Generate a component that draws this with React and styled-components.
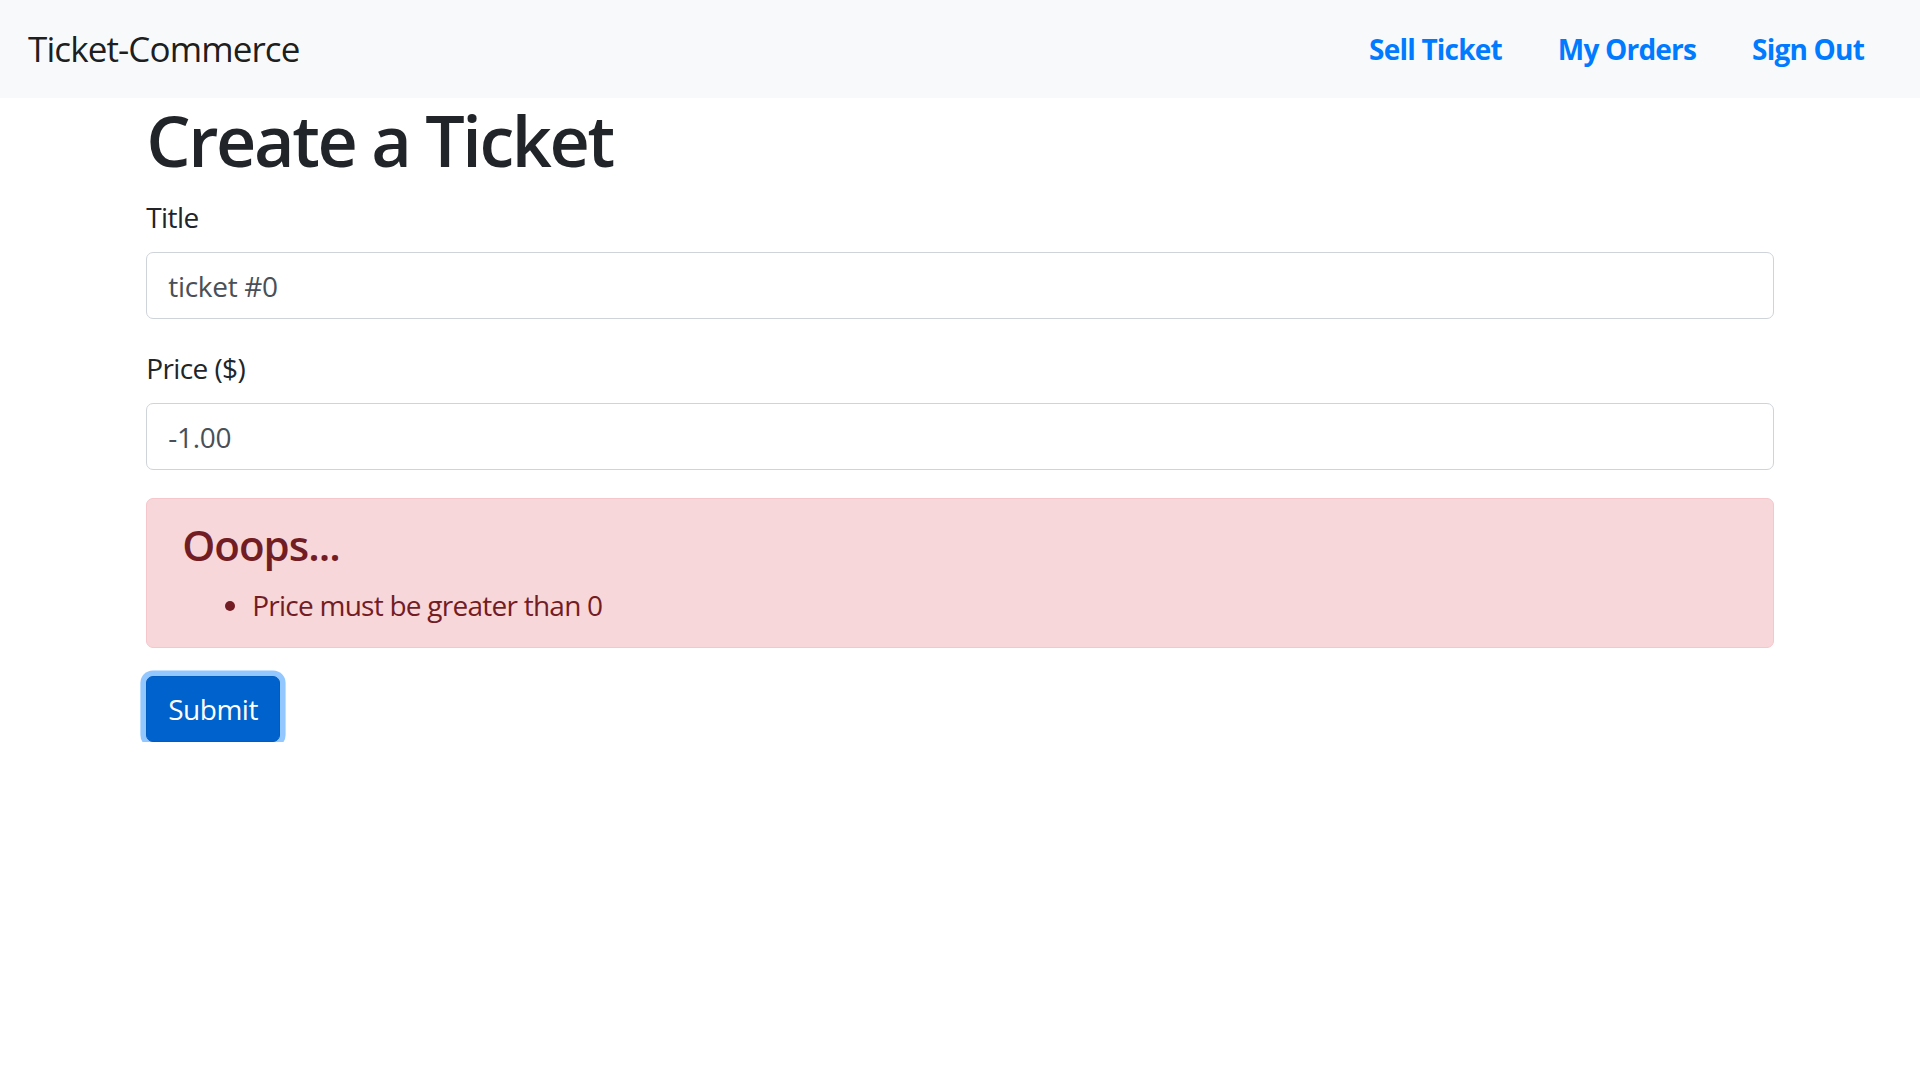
import React from "react";
import styled, { createGlobalStyle } from "styled-components";

const GlobalStyle = createGlobalStyle`
  *, *::before, *::after {
    box-sizing: border-box;
  }
  html, body {
    margin: 0;
    padding: 0;
    background: #fff;
  }
  body {
    font-family: "Segoe UI", "Open Sans", "Noto Sans", sans-serif;
    font-size: 28px;
    line-height: 1.5;
    color: #212529;
  }
`;

const Navbar = styled.nav`
  display: flex;
  align-items: center;
  justify-content: space-between;
  padding: 14px 28px;
  background: #f8f9fa;
`;

const Brand = styled.a`
  display: inline-block;
  padding: 8.75px 0;
  font-size: 35px;
  line-height: 1.5;
  letter-spacing: -0.9px;
  color: rgba(0, 0, 0, 0.9);
  text-decoration: none;
`;

const NavList = styled.ul`
  display: flex;
  margin: 0;
  padding: 0;
  list-style: none;
`;

const NavLink = styled.a`
  display: block;
  padding: 14px 28px;
  font-weight: 700;
  letter-spacing: -0.8px;
  color: #007bff;
  text-decoration: none;
`;

const Container = styled.div`
  width: 1680px;
  margin: 0 auto;
  padding: 0 26.25px;
`;

const Heading = styled.h1`
  margin: 0 0 14px;
  font-size: 70px;
  font-weight: 600;
  line-height: 1.2;
  letter-spacing: -2.4px;
`;

const FormGroup = styled.div`
  margin-bottom: 28px;
`;

const Label = styled.label`
  display: inline-block;
  margin-bottom: 14px;
  letter-spacing: -0.6px;
`;

const Input = styled.input`
  display: block;
  width: 100%;
  height: 67px;
  padding: 10.5px 21px;
  font-family: inherit;
  font-size: 28px;
  line-height: 1.5;
  letter-spacing: -0.3px;
  color: #495057;
  background: #fff;
  border: 1.75px solid #ced4da;
  border-radius: 7px;
  outline: none;
`;

const Alert = styled.div`
  margin-bottom: 28px;
  padding: 21px 35px;
  color: #721c24;
  background: #f8d7da;
  border: 1.75px solid #f5c6cb;
  border-radius: 7px;
`;

const AlertTitle = styled.h4`
  margin: 0 0 14px;
  font-size: 42px;
  font-weight: 600;
  line-height: 1.2;
  letter-spacing: -1px;
`;

const ErrorList = styled.ul`
  margin: 0;
  padding-left: 70px;
  letter-spacing: -0.75px;
`;

const Button = styled.button`
  display: inline-block;
  padding: 10.5px 21px;
  font-family: inherit;
  font-size: 28px;
  line-height: 43px;
  color: #fff;
  background: #0062cc;
  border: 1.75px solid #005cbf;
  border-radius: 7px;
  box-shadow: 0 0 0 5.6px rgba(38, 143, 255, 0.5);
  letter-spacing: -0.5px;
  cursor: pointer;
`;

export default function App() {
  return (
    <>
      <GlobalStyle />
      <Navbar>
        <Brand href="#">Ticket-Commerce</Brand>
        <NavList>
          <li>
            <NavLink href="#">Sell Ticket</NavLink>
          </li>
          <li>
            <NavLink href="#">My Orders</NavLink>
          </li>
          <li>
            <NavLink href="#">Sign Out</NavLink>
          </li>
        </NavList>
      </Navbar>
      <Container>
        <Heading>Create a Ticket</Heading>
        <form onSubmit={(e) => e.preventDefault()}>
          <FormGroup>
            <Label>Title</Label>
            <Input defaultValue="ticket #0" />
          </FormGroup>
          <FormGroup>
            <Label>Price ($)</Label>
            <Input defaultValue="-1.00" />
          </FormGroup>
          <Alert>
            <AlertTitle>Ooops...</AlertTitle>
            <ErrorList>
              <li>Price must be greater than 0</li>
            </ErrorList>
          </Alert>
          <Button type="submit">Submit</Button>
        </form>
      </Container>
    </>
  );
}
